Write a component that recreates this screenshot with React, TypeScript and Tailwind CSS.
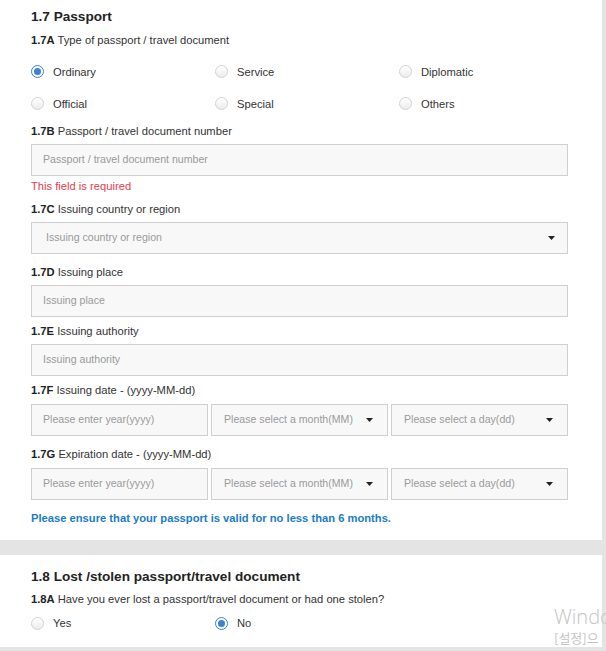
import React from "react";

const font = { fontFamily: '"Liberation Sans", Arial, sans-serif' };

function Radio({ checked, label }: { checked?: boolean; label: string }) {
  return (
    <div className="flex items-center">
      {checked ? (
        <span className="w-[13px] h-[13px] rounded-full border border-[#3b82d6] bg-white flex items-center justify-center">
          <span className="w-[7px] h-[7px] rounded-full bg-[#3b82d6]" />
        </span>
      ) : (
        <span className="w-[13px] h-[13px] rounded-full border border-[#d3d3d3] bg-gradient-to-b from-[#ffffff] to-[#ececec]" />
      )}
      <span className="ml-[9px] text-[11.2px] text-[#333]">{label}</span>
    </div>
  );
}

function Label({ code, text, extra, className = "" }: { code: string; text: string; extra?: string; className?: string }) {
  return (
    <div className={"text-[11.2px] leading-[16px] text-[#333] " + className}>
      <span className="font-bold text-[#222]">{code}</span> {text}
      {extra ? <span className="text-[#333]">{extra}</span> : null}
    </div>
  );
}

function Input({ placeholder, className = "" }: { placeholder: string; className?: string }) {
  return (
    <div className={"h-[32px] border border-[#cfcfcf] bg-[#f8f8f8] flex items-center pl-[11px] text-[10.6px] text-[#9a9a9a] whitespace-nowrap " + className}>
      {placeholder}
    </div>
  );
}

function Caret() {
  return (
    <svg width="7" height="4" viewBox="0 0 7 4" className="shrink-0">
      <path d="M0 0 L7 0 L3.5 4 Z" fill="#222" />
    </svg>
  );
}

function Select({ placeholder, className = "", pl = "pl-[12px]", pr = "pr-[13px]" }: { placeholder: string; className?: string; pl?: string; pr?: string }) {
  return (
    <div className={"h-[32px] border border-[#cfcfcf] bg-[#f8f8f8] flex items-center justify-between text-[10.6px] text-[#9a9a9a] whitespace-nowrap " + pl + " " + pr + " " + className}>
      <span>{placeholder}</span>
      <Caret />
    </div>
  );
}

function DateRow() {
  return (
    <div className="grid grid-cols-3 gap-[3px] mt-[6px]">
      <Input placeholder="Please enter year(yyyy)" />
      <Select placeholder="Please select a month(MM)" pr="pr-[14px]" />
      <Select placeholder="Please select a day(dd)" pr="pr-[14px]" />
    </div>
  );
}

export default function App() {
  return (
    <div className="relative w-[606px] h-[651px] bg-[#e4e4e4] overflow-hidden" style={font}>
      <div className="w-[602px] h-[540px] bg-white pl-[31px] pr-[34px] pt-[8px]">
        <div className="text-[13.6px] leading-[18px] font-bold text-[#222]">1.7 Passport</div>
        <Label code="1.7A" text="Type of passport / travel document" className="mt-[6px]" />
        <div className="mt-[8px] grid grid-cols-[184px_184px_1fr]">
          <div className="h-[32px] flex items-center"><Radio checked label="Ordinary" /></div>
          <div className="h-[32px] flex items-center"><Radio label="Service" /></div>
          <div className="h-[32px] flex items-center"><Radio label="Diplomatic" /></div>
          <div className="h-[32px] flex items-center"><Radio label="Official" /></div>
          <div className="h-[32px] flex items-center"><Radio label="Special" /></div>
          <div className="h-[32px] flex items-center"><Radio label="Others" /></div>
        </div>
        <Label code="1.7B" text="Passport / travel document number" className="mt-[3px]" />
        <Input placeholder="Passport / travel document number" className="mt-[5px]" />
        <div className="mt-[2px] text-[11.2px] leading-[16px] text-[#ea3b4d]">This field is required</div>
        <Label code="1.7C" text="Issuing country or region" className="mt-[7px]" />
        <Select placeholder="Issuing country or region" className="mt-[5px]" pl="pl-[14px]" pr="pr-[12px]" />
        <Label code="1.7D" text="Issuing place" className="mt-[10px]" />
        <Input placeholder="Issuing place" className="mt-[5px]" />
        <Label code="1.7E" text="Issuing authority" className="mt-[6px]" />
        <Input placeholder="Issuing authority" className="mt-[5px]" />
        <Label code="1.7F" text="Issuing date -" extra=" (yyyy-MM-dd)" className="mt-[6px]" />
        <DateRow />
        <Label code="1.7G" text="Expiration date -" extra=" (yyyy-MM-dd)" className="mt-[10px]" />
        <DateRow />
        <div className="mt-[10px] text-[11.2px] leading-[16px] font-bold text-[#1b7bc8]">
          Please ensure that your passport is valid for no less than 6 months.
        </div>
      </div>
      <div className="mt-[15px] w-[602px] h-[92px] bg-white pl-[31px] pt-[13px]">
        <div className="text-[13.6px] leading-[18px] font-bold text-[#222]">1.8 Lost /stolen passport/travel document</div>
        <Label code="1.8A" text="Have you ever lost a passport/travel document or had one stolen?" className="mt-[5px]" />
        <div className="mt-[8px] grid grid-cols-[184px_1fr]">
          <Radio label="Yes" />
          <Radio checked label="No" />
        </div>
      </div>
      <div className="absolute left-[554px] top-[606px] w-[52px] overflow-hidden whitespace-nowrap text-[#c4c4c4]" style={{ fontFamily: '"Open Sans", "Noto Sans CJK KR", sans-serif' }}>
        <div className="text-[20px] leading-[22px] font-light">Windo</div>
        <div className="text-[13px] leading-[18px] mt-[1px]" style={{ fontFamily: '"Noto Sans CJK KR", sans-serif' }}>[설정]으</div>
      </div>
    </div>
  );
}
